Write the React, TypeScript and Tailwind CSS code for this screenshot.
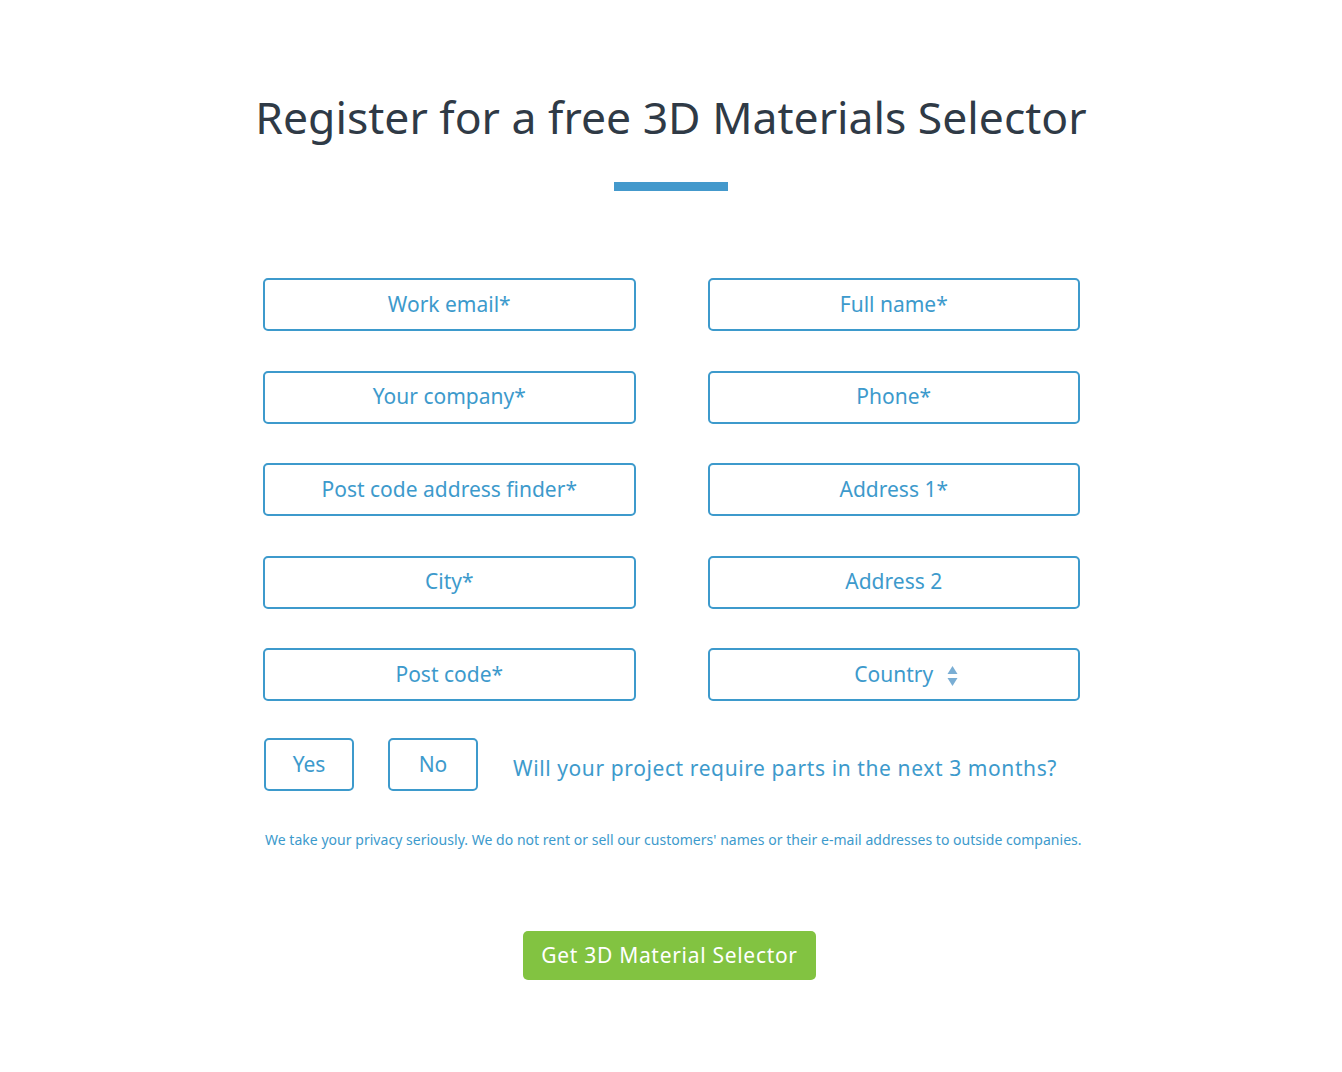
export default function App() {
  const fields = [
    ["Work email*", "Full name*"],
    ["Your company*", "Phone*"],
    ["Post code address finder*", "Address 1*"],
    ["City*", "Address 2"],
  ]

  return (
    <div className="min-h-screen bg-white" style={{ fontFamily: '"Noto Sans", "Open Sans", sans-serif' }}>
      <div className="mx-auto w-[818px] pt-[86px]">
        <h1 className="-mx-10 whitespace-nowrap text-center text-[44.5px] leading-[62px] font-normal text-[#2f3a46]">
          Register for a free 3D Materials Selector
        </h1>
        <div className="mx-auto mt-[34px] h-[9px] w-[114px] bg-[#4499cc]"></div>

        <div className="mt-[87px] grid grid-cols-2 gap-x-[72px] gap-y-[39.5px] pl-px">
          {fields.map(([l, r], i) => (
            <div key={i} className="contents">
              <Field label={l} />
              <Field label={r} />
            </div>
          ))}
          <Field label="Post code*" />
          <div className="flex h-[53px] items-center justify-center rounded-[5px] border-2 border-[#3d9acc] text-[21px] text-[#3d9acc]">
            <span className="relative">
              Country
              <svg width="11" height="24" viewBox="0 0 11 24" className="absolute left-full top-1/2 ml-[14px] -translate-y-1/2">
                <path d="M5.5 3 L10.5 11 L0.5 11 Z" fill="#7aaed4" />
                <path d="M5.5 23 L10.5 15 L0.5 15 Z" fill="#7aaed4" />
              </svg>
            </span>
          </div>
        </div>

        <div className="mt-[37px] flex items-center">
          <button className="ml-[2px] h-[53px] w-[90px] rounded-[5px] border-2 border-[#3d9acc] text-[21px] text-[#3d9acc]">
            Yes
          </button>
          <button className="ml-[34px] h-[53px] w-[90px] rounded-[5px] border-2 border-[#3d9acc] text-[21px] text-[#3d9acc]">
            No
          </button>
          <p className="ml-[35px] mt-[8px] text-[21px] tracking-[0.6px] text-[#3d9acc]">
            Will your project require parts in the next 3 months?
          </p>
        </div>

        <p className="mt-[38px] whitespace-nowrap pl-[3px] text-center text-[14px] tracking-[0.03px] text-[#3d9acc]">
          We take your privacy seriously. We do not rent or sell our customers' names or their e-mail addresses to outside companies.
        </p>

        <div className="mt-[81px] flex justify-center pr-[3px]">
          <button className="h-[49px] w-[293px] rounded-[5px] bg-[#82c341] text-[21px] tracking-[0.7px] text-white">
            Get 3D Material Selector
          </button>
        </div>
      </div>
    </div>
  )
}

function Field({ label }: { label: string }) {
  return (
    <div className="flex h-[53px] items-center justify-center rounded-[5px] border-2 border-[#3d9acc] text-[21px] text-[#3d9acc]">
      {label}
    </div>
  )
}
